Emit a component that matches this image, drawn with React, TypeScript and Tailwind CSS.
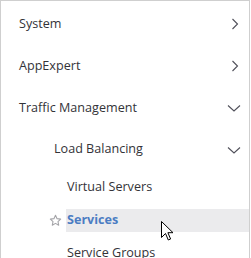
import React from "react";

function ChevronRight() {
  return (
    <svg width="8" height="12" viewBox="0 0 8 12" className="text-[#50505a]">
      <path d="M1.5 1 L6.5 6 L1.5 11" fill="none" stroke="currentColor" strokeWidth="1.1" />
    </svg>
  );
}

function ChevronDown() {
  return (
    <svg width="14" height="8" viewBox="0 0 14 8" className="text-[#50505a]">
      <path d="M1 1.5 L7 7 L13 1.5" fill="none" stroke="currentColor" strokeWidth="1.1" />
    </svg>
  );
}

function Star() {
  return (
    <svg width="13" height="13" viewBox="0 0 24 24" className="text-[#a4a4a8]">
      <path
        d="M12 2.5l2.9 6.1 6.6.8-4.9 4.6 1.3 6.6L12 17.3l-5.9 3.3 1.3-6.6-4.9-4.6 6.6-.8z"
        fill="none"
        stroke="currentColor"
        strokeWidth="2"
        strokeLinejoin="round"
      />
    </svg>
  );
}

function Cursor() {
  return (
    <svg width="13" height="21" viewBox="0 0 13 21" className="absolute left-[160px] top-[220px]">
      <path
        d="M0.5 0.5 L0.5 16.5 L4.5 12.5 L7.3 19 L9.6 18 L6.9 11.7 L12 11.7 Z"
        fill="#fff"
        stroke="#000"
        strokeWidth="1"
        strokeLinejoin="miter"
      />
    </svg>
  );
}

export default function App() {
  return (
    <div
      className="relative w-[250px] h-[258px] overflow-hidden bg-white border-l border-t border-r border-[#cfcfcf] text-[12.6px] text-[#333338]"
      style={{ fontFamily: '"Open Sans", "Noto Sans", sans-serif' }}
    >
      <div className="pt-[2px]">
        {/* Top-level items */}
        <div className="flex items-center justify-between h-[42px] pl-[18px] pr-[10px]">
          <span>System</span>
          <ChevronRight />
        </div>
        <div className="flex items-center justify-between h-[42px] pl-[18px] pr-[10px]">
          <span>AppExpert</span>
          <ChevronRight />
        </div>
        <div className="flex items-center justify-between h-[42px] pl-[18px] pr-[8px]">
          <span>Traffic Management</span>
          <ChevronDown />
        </div>

        {/* Load Balancing */}
        <div className="flex items-center justify-between h-[41px] pl-[53px] pr-[8px]">
          <span>Load Balancing</span>
          <ChevronDown />
        </div>

        <div className="flex flex-col gap-[10px] pt-[6px]">
          <div className="flex items-center h-[23px] pl-[66px]">Virtual Servers</div>
          <div className="flex items-center h-[23px]">
            <div className="w-[65px] flex justify-end pr-[4px]">
              <Star />
            </div>
            <div className="flex-1 h-full flex items-center pl-[1px] bg-[#ebebed] font-bold text-[#4b7dc3]">
              Services
            </div>
          </div>
          <div className="flex items-center h-[23px] pl-[66px]">Service Groups</div>
        </div>
      </div>
      <Cursor />
    </div>
  );
}
